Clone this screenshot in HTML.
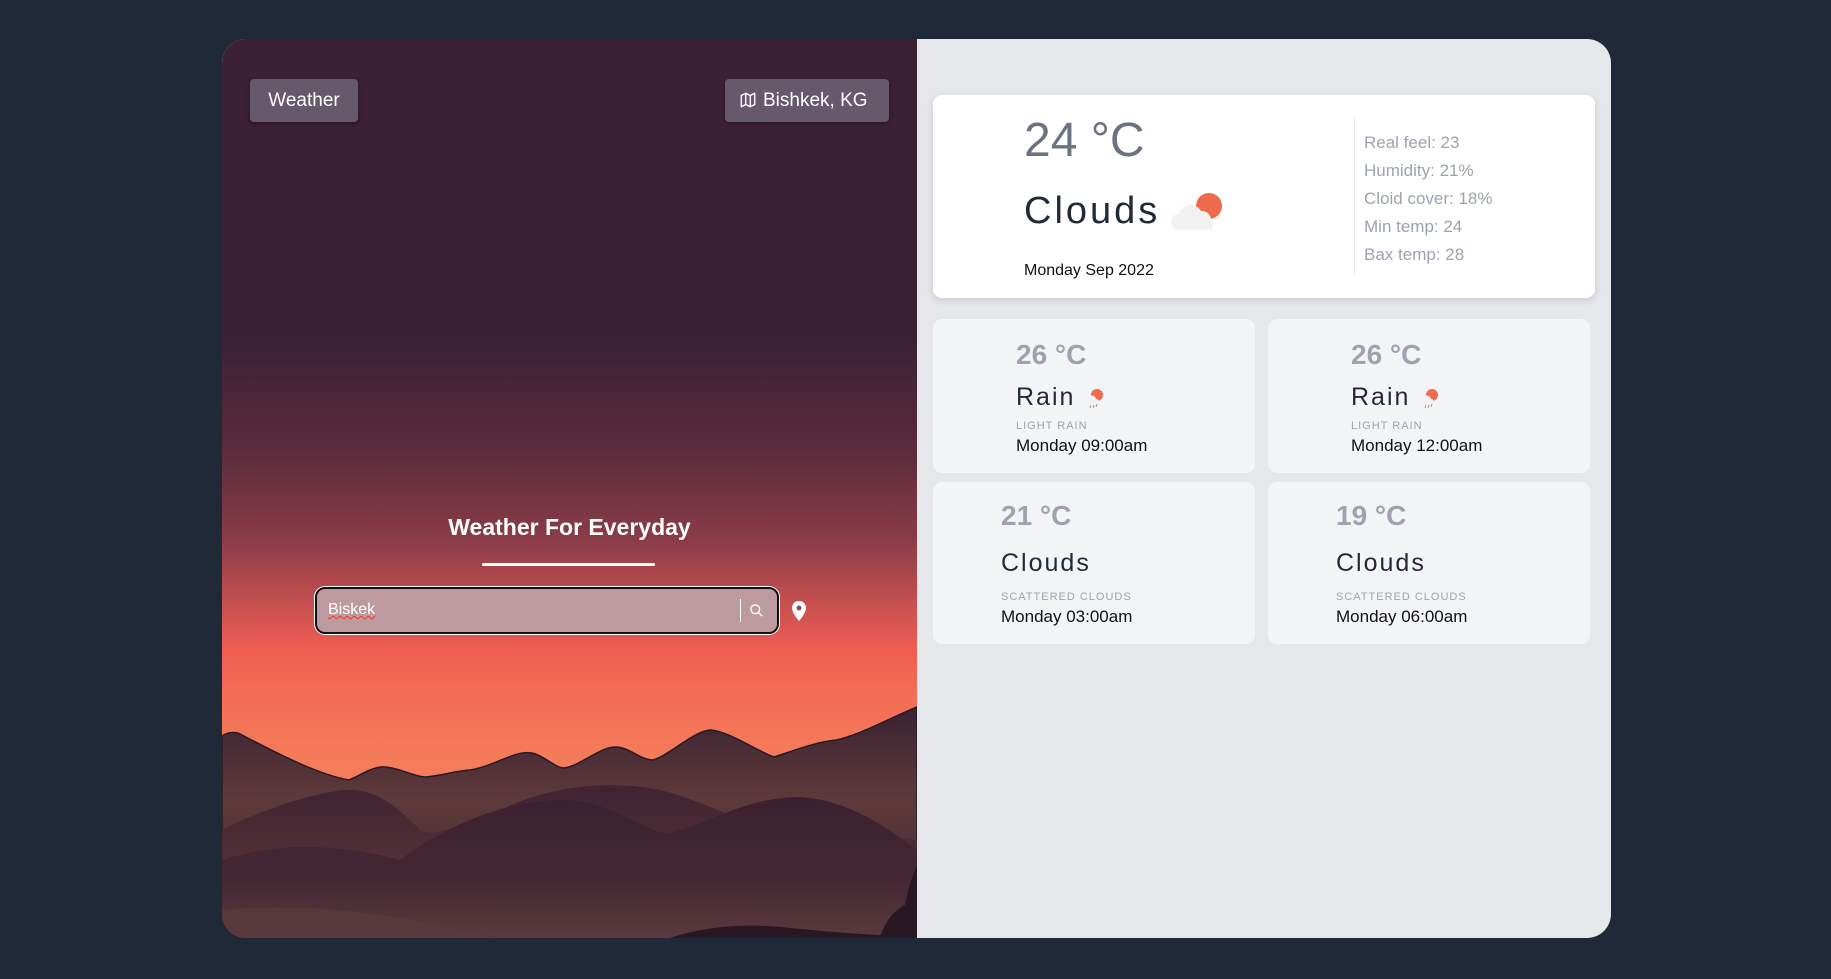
<!DOCTYPE html>
<html><head><meta charset="utf-8"><style>
*{margin:0;padding:0;box-sizing:border-box}
body{width:1831px;height:979px;background:#1f2937;font-family:"Liberation Sans",sans-serif;position:relative;overflow:hidden}
.wrap{position:absolute;left:222px;top:39px;width:1389px;height:899px;border-radius:24px;overflow:hidden;background:#e5e7eb}
.left{position:absolute;left:0;top:0;width:695px;height:899px;background:linear-gradient(180deg,#3b2133 0px,#3c2134 300px,#5a2b3c 410px,#8a3c48 500px,#c24f50 560px,#ef5c52 610px,#f36b55 650px,#f47c5a 720px,#f47c5a 899px);overflow:hidden}
.btn{position:absolute;top:40px;height:43px;background:#66596b;border-radius:4px;color:#fff;font-size:19px;line-height:43px;padding:0 15px;box-shadow:0 2px 4px rgba(0,0,0,.3)}
.t{position:absolute;white-space:nowrap}
.card{position:absolute;border-radius:9px}
</style></head><body>
<div class="wrap">
 <div class="left">
  <svg style="position:absolute;left:0;top:0" width="695" height="899" viewBox="222 39 695 899">
   <defs>
    <linearGradient id="g1" x1="0" y1="0" x2="0" y2="1"><stop offset="0" stop-color="#3a2232"/><stop offset=".4" stop-color="#5e3a3a"/><stop offset="1" stop-color="#3a2232"/></linearGradient>
    <linearGradient id="g2" x1="0" y1="0" x2="0" y2="1"><stop offset="0" stop-color="#3c2131"/><stop offset=".7" stop-color="#5b3639"/><stop offset="1" stop-color="#4a2b34"/></linearGradient>
    <linearGradient id="g3" x1="0" y1="0" x2="0" y2="1"><stop offset="0" stop-color="#3b2130"/><stop offset=".6" stop-color="#452834"/><stop offset="1" stop-color="#5a3a3c"/></linearGradient>
   </defs>
   <path d="M222 736 C228 732 236 731 242 735 C280 755 320 775 349 780 C360 776 372 766 385 767 C400 768 412 776 425 777 C440 776 455 771 470 770 C495 766 515 750 532 753 C545 756 555 768 564 768 C580 766 600 747 615 747 C630 747 640 760 653 760 C670 755 695 730 711 730 C730 732 755 750 774 757 C790 752 815 742 836 740 C860 735 890 718 917 707 L917 938 L222 938Z" fill="url(#g1)" stroke="#2a1826" stroke-width="1.5"/>
   <path d="M222 830 C260 810 320 790 350 790 C380 790 400 810 420 830 C440 840 460 820 500 810 C540 790 600 778 660 790 C700 800 740 820 760 830 C800 835 860 830 917 840 L917 938 L222 938Z" fill="url(#g2)" opacity=".9"/>
   <path d="M222 860 C260 848 300 845 330 848 C360 850 380 855 400 860 C440 830 500 800 564 800 C610 800 640 830 666 833 C700 830 740 797 800 797 C850 800 890 830 917 850 L917 938 L222 938Z" fill="url(#g3)"/>
   <path d="M222 938 L222 910 C280 905 330 908 380 915 C420 920 460 930 500 938Z" fill="#5a3a3c" opacity=".7"/>
   <path d="M880 938 C885 920 895 910 905 905 C910 880 915 870 917 866 L917 938Z" fill="#2a1724"/>
   <path d="M670 938 C700 928 740 922 790 928 C830 932 880 936 917 936 L917 938Z" fill="#2a1724"/>
  </svg>
  <div class="btn" style="left:28px;width:108px;text-align:center;padding:0">Weather</div>
  <div class="btn" style="left:503px;width:164px;padding-left:14px">
   <svg width="18" height="18" viewBox="0 0 24 24" style="vertical-align:-3px;margin-right:6px" fill="none" stroke="#fff" stroke-width="1.8" stroke-linejoin="round"><path d="M3 6l6-3 6 3 6-3v15l-6 3-6-3-6 3z M9 3v15 M15 6v15"/></svg>Bishkek, KG</div>
  <div class="t" style="left:0;width:695px;text-align:center;top:475px;color:#fff;font-weight:bold;font-size:23px">Weather For Everyday</div>
  <div style="position:absolute;left:260px;top:524px;width:173px;height:3px;background:#fff;border-radius:2px"></div>
  <div style="position:absolute;left:92px;top:547px;width:466px;height:49px;border-radius:11px;background:#fff;padding:1px">
   <div style="width:100%;height:100%;border:2px solid #111;border-radius:10px;background:#bd9a9f;position:relative">
    <div class="t" style="left:11px;top:12px;color:#fff;font-size:16px;text-decoration:underline wavy #e33;text-decoration-thickness:1px">Biskek</div>
    <div style="position:absolute;left:423px;top:10px;width:1px;height:23px;background:#fff"></div>
    <svg style="position:absolute;left:432px;top:14px" width="15" height="15" viewBox="0 0 24 24" fill="none" stroke="#fff" stroke-width="2.2"><circle cx="10" cy="10" r="7"/><path d="M15 15l6 6"/></svg>
   </div>
  </div>
  <svg style="position:absolute;left:570px;top:562px" width="14" height="20" viewBox="0 0 14 20"><path d="M7 0C3 0 0 3 0 7c0 5 7 13 7 13s7-8 7-13c0-4-3-7-7-7z" fill="#fff"/><circle cx="7" cy="7" r="2.5" fill="#a5454d"/></svg>
 </div>

 <div class="card" style="left:711px;top:56px;width:662px;height:203px;background:#fff;box-shadow:0 3px 8px rgba(0,0,0,.12)">
  <div class="t" style="left:91px;top:18px;font-size:48px;color:#6b7280;font-weight:300">24 °C</div>
  <div class="t" style="left:91px;top:95px;font-size:38px;color:#1f2937;letter-spacing:3px">Clouds</div>
  <svg style="position:absolute;left:236px;top:97px" width="56" height="42" viewBox="0 0 56 42"><circle cx="40" cy="14" r="13" fill="#ee6a4c"/><path d="M10 38a8 8 0 010-16a12 12 0 0122-3a9 9 0 0110 9a7 7 0 010 10z" fill="#f1f1f1"/></svg>
  <div class="t" style="left:91px;top:167px;font-size:16px;color:#111">Monday Sep 2022</div>
  <div style="position:absolute;left:421px;top:23px;width:1px;height:156px;background:#e5e7eb"></div>
  <div style="position:absolute;left:431px;top:34px;font-size:17px;color:#9ca3af;line-height:28px;white-space:nowrap">Real feel: 23<br>Humidity: 21%<br>Cloid cover: 18%<br>Min temp: 24<br>Bax temp: 28</div>
 </div>

 <div class="card" style="left:711px;top:280px;width:322px;height:154px;background:#f3f4f6">
  <div class="t" style="left:83px;top:20px;font-size:28px;font-weight:bold;color:#9ca3af">26 °C</div>
  <div class="t" style="left:83px;top:64px;font-size:25px;color:#1f2937;letter-spacing:2px">Rain</div>
  <svg style="position:absolute;left:153px;top:69px" width="18" height="22" viewBox="0 0 18 22"><circle cx="11" cy="7" r="6" fill="#ee6a4c"/><path d="M2 12a4 4 0 018-1a3 3 0 013 4H2z" fill="#f1f1f1"/><path d="M5 17l-1 3M8 17l-1 3M11 16l-1 3" stroke="#999" stroke-width="1"/></svg>
  <div class="t" style="left:83px;top:101px;font-size:11px;color:#9ca3af;letter-spacing:1px">LIGHT RAIN</div>
  <div class="t" style="left:83px;top:117px;font-size:17px;color:#111">Monday 09:00am</div>
 </div>
 <div class="card" style="left:1046px;top:280px;width:322px;height:154px;background:#f3f4f6">
  <div class="t" style="left:83px;top:20px;font-size:28px;font-weight:bold;color:#9ca3af">26 °C</div>
  <div class="t" style="left:83px;top:64px;font-size:25px;color:#1f2937;letter-spacing:2px">Rain</div>
  <svg style="position:absolute;left:153px;top:69px" width="18" height="22" viewBox="0 0 18 22"><circle cx="11" cy="7" r="6" fill="#ee6a4c"/><path d="M2 12a4 4 0 018-1a3 3 0 013 4H2z" fill="#f1f1f1"/><path d="M5 17l-1 3M8 17l-1 3M11 16l-1 3" stroke="#999" stroke-width="1"/></svg>
  <div class="t" style="left:83px;top:101px;font-size:11px;color:#9ca3af;letter-spacing:1px">LIGHT RAIN</div>
  <div class="t" style="left:83px;top:117px;font-size:17px;color:#111">Monday 12:00am</div>
 </div>
 <div class="card" style="left:711px;top:443px;width:322px;height:162px;background:#f3f4f6">
  <div class="t" style="left:68px;top:18px;font-size:28px;font-weight:bold;color:#9ca3af">21 °C</div>
  <div class="t" style="left:68px;top:67px;font-size:25px;color:#1f2937;letter-spacing:2px">Clouds</div>
  <div class="t" style="left:68px;top:109px;font-size:11px;color:#9ca3af;letter-spacing:1px">SCATTERED CLOUDS</div>
  <div class="t" style="left:68px;top:125px;font-size:17px;color:#111">Monday 03:00am</div>
 </div>
 <div class="card" style="left:1046px;top:443px;width:322px;height:162px;background:#f3f4f6">
  <div class="t" style="left:68px;top:18px;font-size:28px;font-weight:bold;color:#9ca3af">19 °C</div>
  <div class="t" style="left:68px;top:67px;font-size:25px;color:#1f2937;letter-spacing:2px">Clouds</div>
  <div class="t" style="left:68px;top:109px;font-size:11px;color:#9ca3af;letter-spacing:1px">SCATTERED CLOUDS</div>
  <div class="t" style="left:68px;top:125px;font-size:17px;color:#111">Monday 06:00am</div>
 </div>
</div>
</body></html>
